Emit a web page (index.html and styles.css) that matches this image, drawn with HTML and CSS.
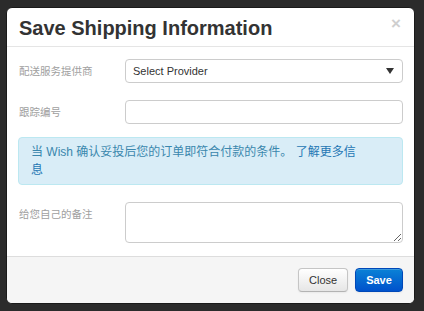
FILE: index.html
```html
<!DOCTYPE html>
<html>
<head>
<meta charset="utf-8">
<link rel="stylesheet" href="styles.css">
</head>
<body>
<div class="backdrop">
  <div class="modal">
    <div class="modal-header">
      <h3 class="title">Save Shipping Information</h3>
      <span class="close-x">×</span>
    </div>
    <div class="modal-body">
      <div class="row">
        <label class="label">配送服务提供商</label>
        <div class="select">
          <span class="select-text">Select Provider</span>
          <svg class="caret" width="8" height="6" viewBox="0 0 8 6"><path d="M0 0H8L4 6Z" fill="#333"/></svg>
        </div>
      </div>
      <div class="row row-gap">
        <label class="label">跟踪编号</label>
        <input class="input" type="text">
      </div>
      <div class="alert">当 Wish 确认妥投后您的订单即符合付款的条件。 <a class="alert-link">了解更多信息</a></div>
      <div class="row row-top">
        <label class="label">给您自己的备注</label>
        <textarea class="textarea"></textarea>
      </div>
    </div>
    <div class="modal-footer">
      <button class="btn">Close</button>
      <button class="btn btn-primary">Save</button>
    </div>
  </div>
</div>
</body>
</html>
```
FILE: styles.css
```css
html, body {
  margin: 0;
  padding: 0;
  background: #2b2b2b;
  font-family: "Liberation Sans", "Noto Sans CJK SC", sans-serif;
}
.backdrop {
  width: 424px;
  height: 311px;
  padding: 7px 0 0 6px;
  box-sizing: border-box;
  overflow: hidden;
}
.modal {
  width: 409px;
  height: 297px;
  box-sizing: border-box;
  background: #fff;
  border: 1px solid #1a1a1a;
  border-radius: 6px;
  overflow: hidden;
  display: flex;
  flex-direction: column;
}
.modal-header {
  height: 40px;
  box-sizing: border-box;
  border-bottom: 1px solid #e5e5e5;
  padding: 0 13px 0 12px;
  display: flex;
  justify-content: space-between;
  align-items: center;
}
.title {
  margin: 0;
  font-size: 20px;
  font-weight: bold;
  color: #333;
  line-height: 24px;
  padding-top: 2px;
}
.close-x {
  font-size: 17px;
  font-weight: bold;
  color: #cfcfcf;
  line-height: 17px;
  align-self: flex-start;
  margin-top: 7px;
}
.modal-body {
  padding: 12px 11px 13px 11px;
  flex: 1;
}
.row {
  display: flex;
  align-items: center;
}
.row-gap {
  margin-top: 17px;
}
.row-top {
  align-items: flex-start;
  margin-top: 17px;
}
.label {
  width: 107px;
  flex: none;
  font-family: "Noto Sans CJK SC", sans-serif;
  font-size: 10.5px;
  color: #a0a0a0;
  line-height: 24px;
  padding-left: 1px;
  box-sizing: border-box;
}
.select, .input, .textarea {
  width: 278px;
  box-sizing: border-box;
  border: 1px solid #ccc;
  border-radius: 4px;
  background: #fff;
  margin: 0;
}
.select {
  height: 24px;
  display: flex;
  align-items: center;
  justify-content: space-between;
  padding: 0 8px 0 7px;
}
.select-text {
  font-size: 11px;
  color: #333;
}
.caret {
  display: block;
}
.input {
  height: 24px;
  padding: 0 6px;
  outline: none;
}
.textarea {
  height: 41px;
  padding: 4px 6px;
  outline: none;
  font-family: inherit;
  font-size: 12px;
}
.alert {
  margin-top: 13px;
  background: #d9edf7;
  border: 1px solid #bce8f1;
  border-radius: 4px;
  padding: 5px 40px 5px 12px;
  font-size: 12px;
  line-height: 18px;
  color: #3a87ad;
}
.alert-link {
  color: #1f77b4;
}
.modal-footer {
  height: 47px;
  box-sizing: border-box;
  background: #f5f5f5;
  border-top: 1px solid #ddd;
  padding: 11px 11px 0 0;
  display: flex;
  justify-content: flex-end;
  align-items: flex-start;
  gap: 7px;
}
.btn {
  height: 24px;
  padding: 0 10px;
  font-family: "Liberation Sans", sans-serif;
  font-size: 11px;
  color: #333;
  background: linear-gradient(#ffffff, #e6e6e6);
  border: 1px solid #c5c5c5;
  border-bottom-color: #b3b3b3;
  border-radius: 4px;
  box-shadow: inset 0 1px 0 rgba(255,255,255,.2), 0 1px 2px rgba(0,0,0,.05);
  width: 50px;
}
.btn-primary {
  width: 48px;
  color: #fff;
  font-weight: bold;
  background: linear-gradient(#0a82d6, #0052cc);
  border-color: #0048b8;
}
```
